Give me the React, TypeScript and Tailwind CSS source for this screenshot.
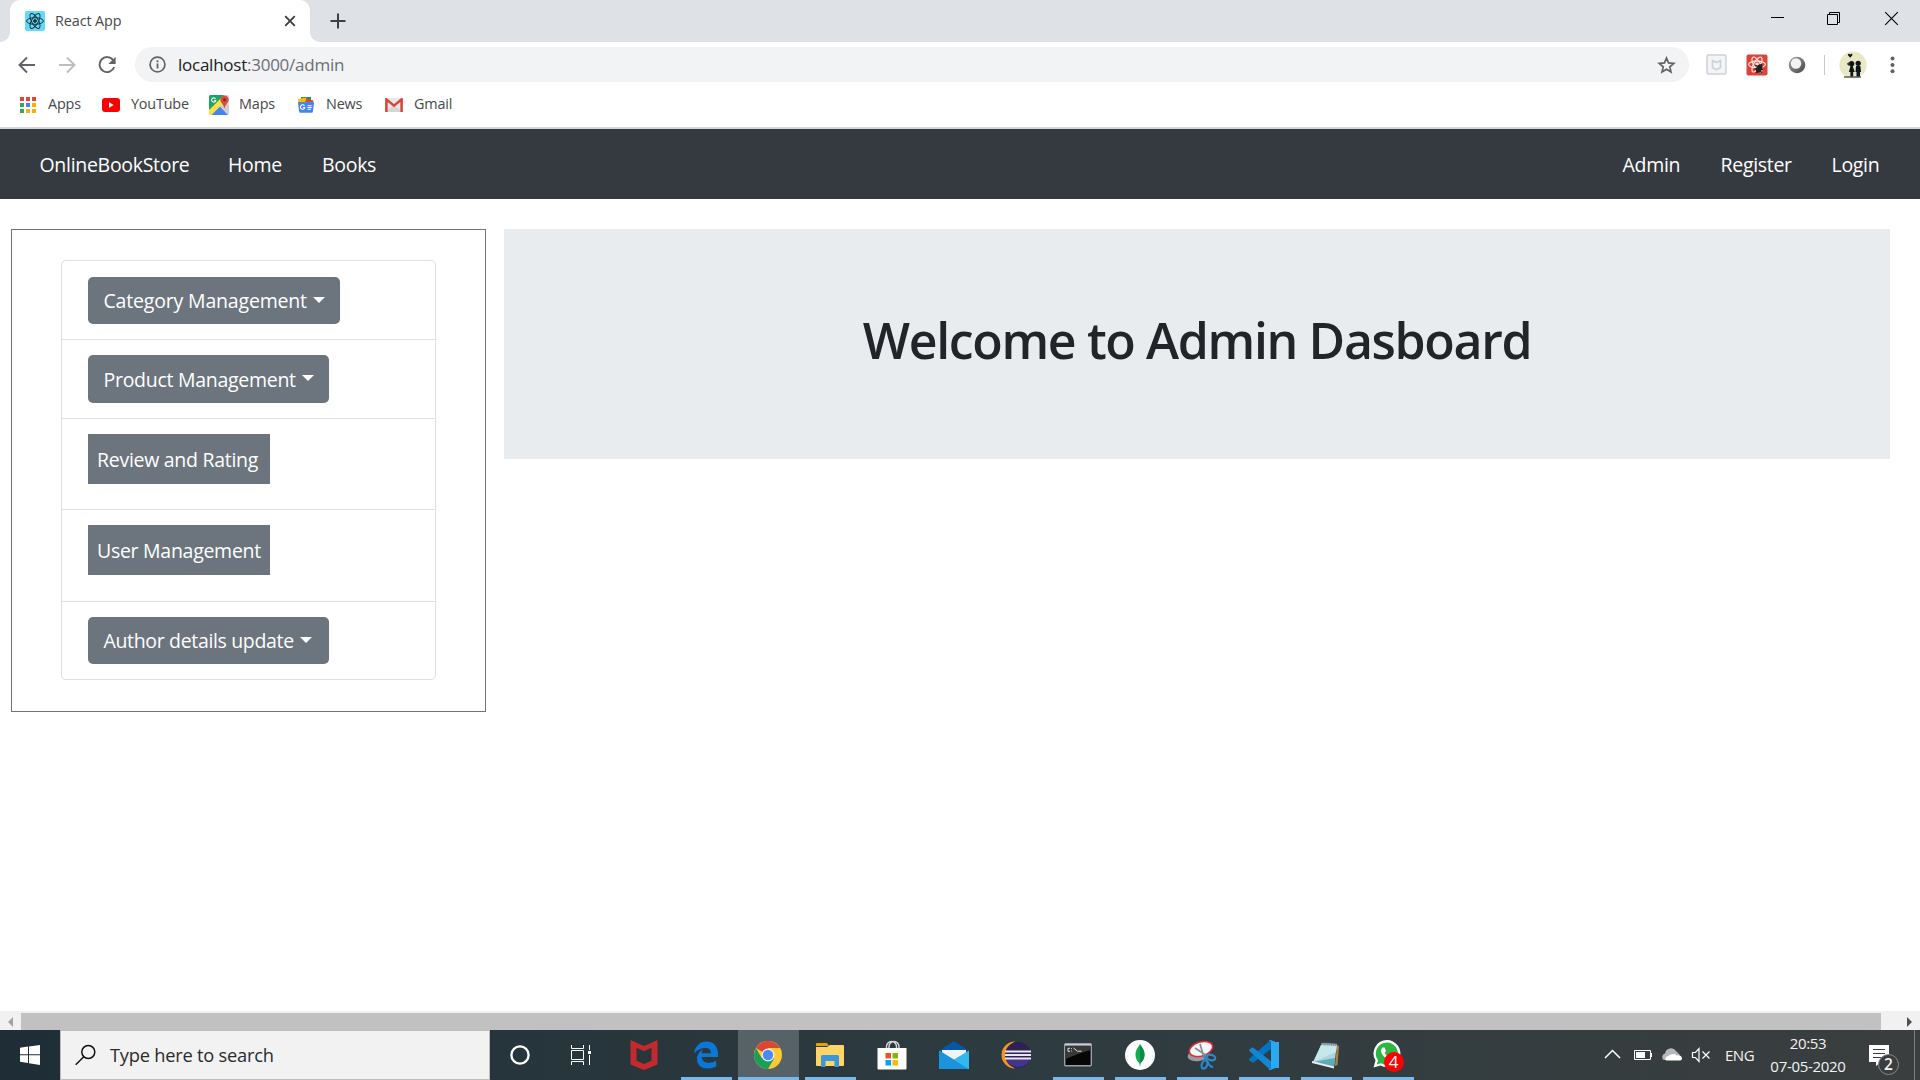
import React from "react";

type Box = { children?: React.ReactNode };

const FONT = "font-['Open_Sans','Noto_Sans',sans-serif]";

function ReactMark({ stroke, sw = 1 }: { stroke: string; sw?: number }) {
  return (
    <g fill="none" stroke={stroke} strokeWidth={sw}>
      <ellipse cx="10" cy="10" rx="8.4" ry="3.3" />
      <ellipse cx="10" cy="10" rx="8.4" ry="3.3" transform="rotate(60 10 10)" />
      <ellipse cx="10" cy="10" rx="8.4" ry="3.3" transform="rotate(120 10 10)" />
      <circle cx="10" cy="10" r="1.4" fill={stroke} />
    </g>
  );
}

function TabStrip() {
  return (
    <div className="flex h-[42px] bg-[#dee1e6]">
      <div className="flex w-[10px] items-end bg-white">
        <div className="h-[42px] w-[10px] rounded-br-[10px] bg-[#dee1e6]" />
      </div>
      <div className="w-[300px] bg-[#dee1e6]">
        <div className="flex h-[42px] items-center rounded-t-[10px] bg-white pl-[15px] pr-[14px]">
          <svg width="20" height="20" viewBox="0 0 20 20">
            <rect width="20" height="20" rx="2" fill="#61dafb" />
            <ReactMark stroke="#20303a" />
          </svg>
          <span className="-mt-px ml-[10px] flex-1 text-[14.4px] tracking-[-0.1px] text-[#45494d]">React App</span>
          <svg width="12" height="12" viewBox="0 0 12 12" stroke="#3c4043" strokeWidth="1.9">
            <path d="M1.2 1.2 10.8 10.8M10.8 1.2 1.2 10.8" />
          </svg>
        </div>
      </div>
      <div className="w-[10px] bg-white">
        <div className="h-[42px] w-[10px] rounded-bl-[10px] bg-[#dee1e6]" />
      </div>
      <svg className="ml-[9.5px] mt-[13px]" width="16" height="16" viewBox="0 0 16 16" stroke="#3c4043" strokeWidth="2">
        <path d="M8 .5v15M.5 8h15" />
      </svg>
      <div className="flex-1" />
      <svg className="mt-[11px]" width="150" height="16" viewBox="0 0 150 16" fill="none" stroke="#000" strokeWidth="1">
        <path d="M1 6.5h13M57.500 3.500h10v10h-10zM59.500 3.500v-2h10v10h-2" />
        <path d="m115.200 1.200 12.600 12.600M127.800 1.200l-12.600 12.600" strokeWidth="1.1" />
      </svg>
    </div>
  );
}

function Toolbar() {
  return (
    <div className="flex h-[46px] items-center bg-white pb-px">
      <svg className="ml-[18px]" width="18" height="18" viewBox="0 0 18 18" fill="none" stroke="#5f6368" strokeWidth="1.9">
        <path d="M17 9H2M9 1.500 1.500 9 9 16.500" />
      </svg>
      <svg className="ml-[22px]" width="18" height="18" viewBox="0 0 18 18" fill="none" stroke="#bcbec1" strokeWidth="1.9">
        <path d="M1 9h15M9 1.500 16.500 9 9 16.500" />
      </svg>
      <svg className="ml-[22px]" width="18" height="18" viewBox="0 0 18 18">
        <path d="M15.200 4.200A7.500 7.500 0 1 0 16.200 11" fill="none" stroke="#5f6368" strokeWidth="1.900" />
        <path d="M17.600.800V8h-7.200z" fill="#5f6368" />
      </svg>
      <div className="ml-[19px] flex h-[35px] w-[1554px] items-center rounded-full bg-[#f1f3f4] pl-[14px] pr-[13px]">
        <svg width="17" height="17" viewBox="0 0 17 17" fill="none" stroke="#5f6368">
          <circle cx="8.500" cy="8.500" r="7.400" strokeWidth="1.700" />
          <path d="M8.500 7.500v5M8.500 4.300v1.900" strokeWidth="1.800" />
        </svg>
        <span className="ml-[12px] flex-1 text-[17px] tracking-[-0.25px] text-[#202124]">
          localhost<span className="text-[#6b6f74]">:3000/admin</span>
        </span>
        <svg width="19" height="18" viewBox="0 0 19 18" fill="none" stroke="#5f6368" strokeWidth="1.700">
          <path d="m9.500 2.100 2.050 4.850 5.250.450-4 3.450 1.200 5.150-4.500-2.750L5 16l1.200-5.150-4-3.450 5.250-.450z" />
        </svg>
      </div>
      <svg className="ml-[17px]" width="22" height="22" viewBox="0 0 22 22">
        <rect x="1" y="1" width="19" height="19" rx="1.500" fill="#f3f5f6" stroke="#ccd2d7" strokeWidth="1.500" />
        <path d="m6.500 6.500 4 2 4-2v7.200l-4 2-4-2z" fill="none" stroke="#ccd2d7" strokeWidth="1.600" />
      </svg>
      <svg className="ml-[17.5px]" width="22" height="22" viewBox="0 0 22 22">
        <rect x=".5" y=".5" width="21" height="21" rx="2" fill="#db4437" />
        <g transform="translate(1 .5)">
          <ReactMark stroke="#ffe3df" sw={1.2} />
        </g>
        <ellipse cx="13.200" cy="14.500" rx="2.900" ry="4.300" transform="rotate(25 13.200 14.500)" fill="#222" />
        <path d="m9 11 4 2 3-3M8.500 15l4-.5 4.500 1M10 19l2-3 4 2.500" stroke="#222" fill="none" strokeWidth="1.300" />
      </svg>
      <svg className="ml-[20px]" width="18" height="20" viewBox="0 0 18 20">
        <defs>
          <linearGradient id="ball" x1="0" y1="0" x2="1" y2="1">
            <stop offset="0" stopColor="#aaa" />
            <stop offset="1" stopColor="#444" />
          </linearGradient>
        </defs>
        <circle cx="9" cy="10" r="8.300" fill="url(#ball)" />
        <circle cx="8" cy="8.500" r="5.200" fill="#f4f4f4" />
      </svg>
      <div className="ml-[18px] h-[20px] w-px bg-[#c6c9cd]" />
      <svg className="ml-[14px]" width="28" height="28" viewBox="0 0 28 28">
        <circle cx="14" cy="14" r="13.600" fill="#e9e8c4" />
        <path d="M11.200 6.800 9 4.300c-.5-1.500 1.300-2 2.200-.8.9-1.200 2.700-.7 2.200.8z" fill="#151515" />
        <g fill="#10151c">
          <circle cx="12.600" cy="12.700" r="2.700" />
          <path d="m9.500 11-1.500 2 2 2zM11.500 15h2.200l2 6h-1.500v4.500h-2.800V21h-1.500zM17 15h4.400l.6 6h-1v4.500h-3.500V21h-1z" />
          <circle cx="19.200" cy="12.300" r="2.600" />
          <path d="M5 25.500h17v1H5z" />
        </g>
      </svg>
      <svg className="ml-[23.5px]" width="5" height="18" viewBox="0 0 5 18" fill="#5f6368">
        <circle cx="2.500" cy="2.600" r="2" />
        <circle cx="2.500" cy="9" r="2" />
        <circle cx="2.500" cy="15.300" r="2" />
      </svg>
    </div>
  );
}

const APP_COLORS = ["#ea4335", "#ea4335", "#ea4335", "#34a853", "#4285f4", "#fbaf05", "#34a853", "#fbaf05", "#fbaf05"];

function Bookmarks() {
  return (
    <div className="flex h-[39px] items-center bg-white pb-[6px] text-[14.4px] tracking-[-0.15px] text-[#45494d]">
      <svg className="ml-[19px]" width="18" height="18" viewBox="0 0 18 18">
        {APP_COLORS.map((c, i) => (
          <rect key={i} x={1 + (i % 3) * 6} y={1 + Math.floor(i / 3) * 6} width="4" height="4" fill={c} />
        ))}
      </svg>
      <span className="-mt-px ml-[11px] w-[34px]">Apps</span>
      <svg className="ml-[20px]" width="18" height="14" viewBox="0 0 18 14">
        <rect width="18" height="14" rx="3" fill="#f00" />
        <path d="M7 4.200v5.600L11.800 7z" fill="#fff" />
      </svg>
      <span className="-mt-px ml-[11px] w-[58px] tracking-[-0.2px]">YouTube</span>
      <svg className="ml-[20px]" width="20" height="20" viewBox="0 0 20 20">
        <rect width="20" height="20" rx="1.500" fill="#d9dbdd" />
        <path d="M0 1.500Q0 0 1.500 0H15L0 16z" fill="#1fa463" />
        <path d="M0 15 12 3.500l4 4L3 20H1.500Q0 20 0 18.500z" fill="#ffe047" />
        <path d="M2.500 20 11 11.500 19 20z" fill="#4285f4" />
        <path d="m11.500 12 5-5L20 11v8z" fill="#cdd0d3" />
        <path d="M15.500.5a4.200 4.200 0 0 1 4.200 4.200c0 3-3.500 4.300-4.200 9-.7-4.700-4.200-6-4.200-9A4.200 4.200 0 0 1 15.500.5z" fill="#dd4b3e" />
        <circle cx="15.500" cy="4.700" r="1.500" fill="#7d2820" />
        <path d="M6.600 4a2.100 2.100 0 1 0 .2 1.500H5.200" fill="none" stroke="#fff" strokeWidth="1.100" />
      </svg>
      <span className="-mt-px ml-[10px] w-[37px]">Maps</span>
      <svg className="ml-[20px]" width="20" height="18" viewBox="0 0 20 18">
        <path d="m5 1 10 0v8H5z" fill="#0f9d58" />
        <path d="m2 3 8-1.500 2 6-9 2z" fill="#fbbc04" />
        <path d="m10 2.500 7.500 2-1.500 6-7-2z" fill="#ea4335" />
        <path d="M2 7Q1.500 6 3 6h14q1.500 0 1 1l-1.200 8.700q-.1 1-1.100 1H4.300q-1 0-1.100-1z" fill="#4285f4" />
        <path d="M8.500 9.800a2.200 2.200 0 1 0 .3 1.700H7M11.500 9.700h4.200M11.500 11.500h4.200M11.500 13.300h3.500" fill="none" stroke="#fff" strokeWidth="1.100" />
      </svg>
      <span className="-mt-px ml-[10px] w-[37px]">News</span>
      <svg className="ml-[22px]" width="18" height="14" viewBox="0 0 18 14">
        <rect width="18" height="14" rx="1.500" fill="#e8e8e8" />
        <path d="m0 14 9-7 9 7z" fill="#d5d5d5" />
        <path d="M1.400 14V1.400L9 7.600l7.600-6.200V14" fill="none" stroke="#db4437" strokeWidth="2.500" />
      </svg>
      <span className="-mt-px ml-[11px]">Gmail</span>
    </div>
  );
}

function NavBar() {
  return (
    <nav className="flex h-[70px] items-center bg-[#343a40] pl-[39.5px] pr-[39.5px] pt-[2px] text-[19.5px] tracking-[-0.3px] text-white">
      <span className="w-[149px]">OnlineBookStore</span>
      <span className="ml-[39.5px] w-[54px]">Home</span>
      <span className="ml-[40px]">Books</span>
      <div className="flex-1" />
      <span className="w-[58px]">Admin</span>
      <span className="ml-[40px] w-[71px]">Register</span>
      <span className="ml-[40px] w-[49px]">Login</span>
    </nav>
  );
}

function Caret() {
  return <span className="mb-[3px] ml-[6px] border-x-[6px] border-t-[6px] border-x-transparent border-t-white" />;
}

function DropButton({ children, className }: Box & { className: string }) {
  return (
    <button className={`flex items-center whitespace-nowrap rounded-[5px] bg-[#6c757d] pl-[15.5px] pt-px text-white ${className}`}>
      {children}
      <Caret />
    </button>
  );
}

function Sidebar() {
  return (
    <aside className="h-[483px] w-[475px] border border-[#6c757d] px-[49px] pt-[30px] text-[19.5px] tracking-[-0.28px]">
      <div className="h-[420px] rounded-[5px] border border-[#dfdfdf]">
        <div className="h-[79px] border-b border-[#dfdfdf] pl-[26px] pt-[16px]">
          <DropButton className="h-[47px] w-[252px] tracking-[-0.18px]">Category Management</DropButton>
        </div>
        <div className="h-[79px] border-b border-[#dfdfdf] pl-[26px] pt-[15px]">
          <DropButton className="h-[48px] w-[241px]">Product Management</DropButton>
        </div>
        <div className="h-[91px] border-b border-[#dfdfdf] pl-[26px] pt-[15px]">
          <div className="flex h-[50px] w-[182px] items-center whitespace-nowrap bg-[#6c757d] pl-[9px] pt-[2px] text-white">Review and Rating</div>
        </div>
        <div className="h-[92px] border-b border-[#dfdfdf] pl-[26px] pt-[15px]">
          <div className="flex h-[50px] w-[182px] items-center whitespace-nowrap bg-[#6c757d] pl-[9px] pt-[2px] text-white">User Management</div>
        </div>
        <div className="pl-[26px] pt-[15px]">
          <DropButton className="h-[47px] w-[241px] tracking-[-0.34px]">Author details update</DropButton>
        </div>
      </div>
    </aside>
  );
}

function ScrollBar() {
  return (
    <div className="flex h-[19px] bg-[#f1f1f1]">
      <div className="flex w-[21px] items-center pl-[8px] pt-[2px]">
        <span className="border-y-[5px] border-r-[5px] border-y-transparent border-r-[#a3a3a3]" />
      </div>
      <div className="mt-[2px] h-[17px] w-[1860px] bg-[#c1c1c1]" />
      <div className="flex flex-1 items-center pl-[26px] pt-[2px]">
        <span className="border-y-[5px] border-l-[5px] border-y-transparent border-l-[#505050]" />
      </div>
    </div>
  );
}

function Slot({ children, open, active }: Box & { open?: boolean; active?: boolean }) {
  return (
    <div className="flex h-[50px] w-[62px] flex-col">
      <div className={`flex h-[47px] w-[61px] items-center justify-center pr-[2px] pt-[3px] ${active ? "bg-[#566268]" : ""}`}>{children}</div>
      {active && <div className="h-[3px] w-[61px] bg-[#76b9ed]" />}
      {open && !active && <div className="ml-[5px] h-[3px] w-[51px] bg-[#76b9ed]" />}
    </div>
  );
}

function TaskIcons() {
  return (
    <>
      <Slot>
        <svg width="22" height="22" viewBox="0 0 22 22">
          <circle cx="11" cy="11" r="8.600" fill="none" stroke="#fff" strokeWidth="2.300" />
        </svg>
      </Slot>
      <Slot>
        <svg className="-ml-[2px]" width="20" height="20" viewBox="0 0 20 20" fill="none" stroke="#fff" strokeWidth="1">
          <path d="M.5 0v3.500h12V0M.5 20v-3.500h12V20M.5 5.500h12v9H.5zM18.500 0v5M18.500 10v10" />
          <path d="M17 6h3v3h-3z" fill="#fff" stroke="none" />
        </svg>
      </Slot>
      <Slot>
        <svg width="28" height="32" viewBox="0 0 28 32">
          <path d="m.5 1 13.500 6 13.500-6v24.500L14 31 .5 25.500zM6.500 8.800v13L14 25l7.500-3.200v-13L14 12.300z" fill="#c5292e" fillRule="evenodd" />
        </svg>
      </Slot>
      <Slot open>
        <svg width="26" height="28" viewBox="0 0 26 28">
          <path d="M1 12.500C2.200 5 7 .5 13.500.5 21 .5 25 6 25 12.700V16H8.700c.2 4 3.300 5.800 7.300 5.800 2.700 0 5-.7 7.200-2v5.700c-2.700 1.300-5.600 2-8.700 2C7.700 27.500 4 23.300 4 18c0-4.300 2.500-8 6.300-9.800-1 1.200-1.500 2.500-1.600 4h9.200c.1-3.500-2-5.300-5.200-5.300C8.100 6.900 4.200 8.700 1 12.500z" fill="#0a78d7" />
        </svg>
      </Slot>
      <Slot active>
        <svg width="28" height="28" viewBox="0 0 28 28">
          <circle cx="14" cy="14" r="14" fill="#fcc934" />
          <path d="M14 14 1.900 7A14 14 0 0 1 26.100 7H14z" fill="#db4437" />
          <path d="M1.900 7A14 14 0 0 0 14 28l6-10.500L14 14 8 17.500z" fill="#1b9e58" />
          <circle cx="14" cy="14" r="6.500" fill="#f1f1f1" />
          <circle cx="14" cy="14" r="5.200" fill="#4a8af4" />
        </svg>
      </Slot>
      <Slot open>
        <svg width="28" height="24" viewBox="0 0 28 24">
          <path d="M0 1q0-1 1-1h10l2 3H0z" fill="#e5a100" />
          <path d="M0 4h11l3-2h13q1 0 1 1v19q0 1-1 1H1q-1 0-1-1z" fill="#ffd566" />
          <path d="M5 24V13.500q0-1.500 1.500-1.500h15q1.500 0 1.500 1.500V24h-4.500v-6h-9v6z" fill="#3a96dd" />
        </svg>
      </Slot>
      <Slot>
        <svg className="mb-[1px]" width="30" height="30" viewBox="0 0 30 30">
          <path d="M9.500 9V6.500a5 5 0 0 1 10 0V9M12 9V6.500a5 5 0 0 1 10 0V9" fill="none" stroke="#d6dadc" strokeWidth="1.400" />
          <path d="M.5 8h29v20.500q0 1-1 1h-27q-1 0-1-1z" fill="#fff" />
          <path d="M8.500 13H14v5.500H8.500z" fill="#f25022" />
          <path d="M15.500 13H21v5.500h-5.500z" fill="#7fba00" />
          <path d="M8.500 20H14v5.500H8.500z" fill="#00a4ef" />
          <path d="M15.500 20H21v5.500h-5.500z" fill="#ffb900" />
        </svg>
      </Slot>
      <Slot>
        <svg width="30" height="28" viewBox="0 0 30 28">
          <path d="M0 10 15 0l15 10v5H0z" fill="#0458a5" />
          <path d="M3 9h24v6l-12 6L3 15z" fill="#f1f3f5" />
          <path d="m0 9.500 15 9 15-9V28H0z" fill="#32b7ee" />
          <path d="m0 9.500 29.500 18.500H0z" fill="#1b93dd" />
        </svg>
      </Slot>
      <Slot>
        <svg width="30" height="28" viewBox="0 0 30 28">
          <path d="M14 .5A13.500 13.500 0 0 0 14 27.500 15 15 0 0 1 14 .5z" fill="#f7941e" />
          <circle cx="17" cy="14" r="13" fill="#2c2255" />
          <path d="M5 18h24q-3 8-12 8T5 18z" fill="#45358a" />
          <path d="M4 10.500h26M4 14h26M4 17.500h26" stroke="#e8e6f0" strokeWidth="2" />
        </svg>
      </Slot>
      <Slot open>
        <svg width="28" height="24" viewBox="0 0 28 24">
          <rect x=".7" y=".7" width="26.600" height="22" rx="1" fill="#060606" stroke="#9ca0a3" strokeWidth="1.400" />
          <path d="M1 1.800h26" stroke="#c9cdd0" strokeWidth="1.800" />
          <path d="M1.500 3h25v4L14 11 1.500 16z" fill="#383838" />
          <path d="M6 5.300H4v3h2M7.500 5v.8M7.500 7.500v.8M9.500 5l4 3.200h4" fill="none" stroke="#ddd" />
        </svg>
      </Slot>
      <Slot open>
        <svg width="30" height="30" viewBox="0 0 30 30">
          <circle cx="15" cy="15" r="15" fill="#fff" />
          <path d="M15 4c1 2.500 4.500 5 4.500 10.500 0 5-2.700 7.300-4 9l-.3 2.500h-.5l-.3-2.500c-1.300-1.700-3.900-4-3.900-9C10.500 9 14 6.500 15 4z" fill="#13aa52" />
          <path d="M15 4c1 2.500 4.500 5 4.500 10.500 0 5-2.700 7.300-4.300 9z" fill="#0f8a45" />
        </svg>
      </Slot>
      <Slot open>
        <svg width="30" height="30" viewBox="0 0 30 30">
          <ellipse cx="11.500" cy="15" rx="11" ry="6" transform="rotate(-10 11.500 15)" fill="#959b9f" />
          <ellipse cx="14" cy="9" rx="12" ry="7" transform="rotate(-17 14 9)" fill="#f5f7f8" stroke="#e02b2f" strokeWidth="1.500" />
          <path d="m13 4 4.500 15M8 8l12 8" stroke="#899094" strokeWidth="1.800" />
          <g fill="none" stroke="#2e86c9" strokeWidth="2.200">
            <ellipse cx="24" cy="17.500" rx="4.300" ry="2.700" transform="rotate(15 24 17.500)" />
            <ellipse cx="17.500" cy="24.500" rx="2.700" ry="4.200" transform="rotate(20 17.500 24.500)" />
            <path d="m17 15.500 5 9q2 3 4 2" />
          </g>
        </svg>
      </Slot>
      <Slot open>
        <svg width="30" height="30" viewBox="0 0 30 30">
          <path d="M21.500 0 22 9 4 23 .3 20.200q-.6-.7 0-1.400z" fill="#0075c2" />
          <path d="m4 7.500 18.500 14L21.500 30 .3 11q-.5-.8 0-1.300L3 7.500q.5-.4 1 0z" fill="#1487d4" />
          <path d="m21.500 0 7.500 3q1 .5 1 1.500v21q0 1-1 1.500l-7.500 3q-1.500.2-2-1 2 .8 2.500-1V2q-.5-1.800-2.500-1 .7-1 2-1z" fill="#29a8f4" />
          <path d="M22 2h8v26h-8z" fill="#29a8f4" />
        </svg>
      </Slot>
      <Slot open>
        <svg width="28" height="28" viewBox="0 0 28 28">
          <path d="m25 4 2 1-1.500 19-2.500 1z" fill="#a58345" />
          <path d="m10 2 15 1-3 23L1 21z" fill="#a9d7df" />
          <path d="m10 2 15 1-1 8L6 19l-4 1z" fill="#c6e7eb" />
          <path d="m1 21 21 5 1-9z" fill="#5eaaba" />
          <path d="m0 20 22 5.500v2L0 22z" fill="#e9eef0" />
          <path d="M9.500 2.500 25 3.500" stroke="#53595b" strokeWidth="3" strokeDasharray="1 1" />
        </svg>
      </Slot>
      <Slot open>
        <div className="relative h-[30px] w-[30px]">
          <svg width="28" height="28" viewBox="0 0 28 28">
            <path d="M14 0a13.500 13.500 0 1 1-6.500 25.400L.5 27.500l2-7A13.500 13.500 0 0 1 14 0z" fill="#fff" />
            <path d="M14 2.400A11.200 11.200 0 1 1 8 23.200l-4.200 1.200L5 20.200A11.200 11.200 0 0 1 14 2.400z" fill="#2cb742" />
            <path d="M9.500 7.500c-3 3-1 7 2.500 10s7 4.500 9 1l-3-3-2 1.500c-2-.8-3.500-2.500-4.300-4.300l1.300-1.700-1.500-3.500z" fill="#fff" />
          </svg>
          <span className="absolute left-[11px] top-[12px] flex h-[20px] w-[20px] items-center justify-center rounded-full bg-[#f00] text-[17px] text-white">
            4
          </span>
        </div>
      </Slot>
    </>
  );
}

function TaskBar() {
  return (
    <footer className="flex h-[50px] bg-linear-to-r from-[#1f2e36] via-[#2d3b40] to-[#3a3e3f]">
      <div className="flex w-[60px] items-center justify-center">
        <svg width="20" height="20" viewBox="0 0 20 20" fill="#fff">
          <path d="M0 2.700 8 1.600v7.700H0zM9 1.400 20 0v9.300H9zM0 10.300h8V18l-8-1.200zM9 10.300h11V20L9 18.300z" />
        </svg>
      </div>
      <div className="flex h-[50px] w-[430px] items-center border border-[#bdbdbd] bg-[#f2f2f2] pl-[14px]">
        <svg width="21" height="22" viewBox="0 0 21 22" fill="none" stroke="#111" strokeWidth="1.500">
          <circle cx="13.300" cy="8" r="6.500" />
          <path d="M8.800 12.800.7 20.700" />
        </svg>
        <span className="ml-[14px] text-[18.300px] tracking-[-0.24px] text-[#2b2b2b]">Type here to search</span>
      </div>
      <TaskIcons />
      <div className="flex-1" />
      <div className="flex items-center text-[#f3f3f3]">
        <svg width="108" height="20" viewBox="0 0 108 20" fill="none" stroke="#fff">
          <path d="m1 13 7.500-7.500L16 13" strokeWidth="1.500" />
          <path d="M30.500 5.500h16v9h-16zM47.500 8v4" />
          <path d="M32 7h9v6h-9z" fill="#fff" stroke="none" />
          <path d="M60 15a3.500 3.500 0 0 1 1-6.500A6 6 0 0 1 72 6l4 4-6 5z" fill="#b5b8b9" stroke="none" />
          <path d="M62 15.500q-2-3 2-4.500l3-1.500q4-1.500 5.500 1 5-.8 5.500 3 0 2-2 2z" fill="#fff" stroke="none" />
          <path d="M88.500 7.500h3l3.500-4v13l-3.500-4h-3zM98.500 6.500l7 7M105.500 6.500l-7 7" strokeWidth="1.200" />
        </svg>
        <span className="ml-[13px] w-[29px] text-[15px] tracking-[-0.5px]">ENG</span>
        <div className="ml-[15px] flex w-[78px] flex-col items-center whitespace-nowrap text-[15px] leading-[23px] tracking-[-0.3px]">
          <span>20:53</span>
          <span>07-05-2020</span>
        </div>
        <div className="relative ml-[22px] mt-[10px] h-[30px] w-[30px]">
          <svg width="30" height="30" viewBox="0 0 30 30">
            <path d="M0 0h20v17h-8l-5 4v-4H0z" fill="#fff" />
            <path d="M4 4.500h12M4 8.500h12M4 12.500h8" stroke="#3a3e3f" />
            <circle cx="19.500" cy="19.500" r="10" fill="#3a3e3f" stroke="#888b8c" />
          </svg>
          <span className="absolute left-[15px] top-[9px] text-[15.500px] font-semibold leading-[21px]">2</span>
        </div>
        <div className="ml-[15px] h-[50px] w-px bg-[#7b7e7f]" />
        <div className="w-[5px]" />
      </div>
    </footer>
  );
}

export default function App() {
  return (
    <div className={`flex h-[1080px] w-[1920px] flex-col overflow-hidden bg-white ${FONT}`}>
      <TabStrip />
      <Toolbar />
      <Bookmarks />
      <div className="h-[2px] bg-[#d5d7db]" />
      <NavBar />
      <main className="flex h-[812px] gap-[18px] pl-[11px] pt-[30px]">
        <Sidebar />
        <section className="flex h-[230px] w-[1386px] justify-center bg-[#e9ecef] pt-[77px]">
          <h1 className="whitespace-nowrap text-[50px] font-semibold leading-[68px] tracking-[-1.35px] text-[#212529]">Welcome to Admin Dasboard</h1>
        </section>
      </main>
      <ScrollBar />
      <TaskBar />
    </div>
  );
}
